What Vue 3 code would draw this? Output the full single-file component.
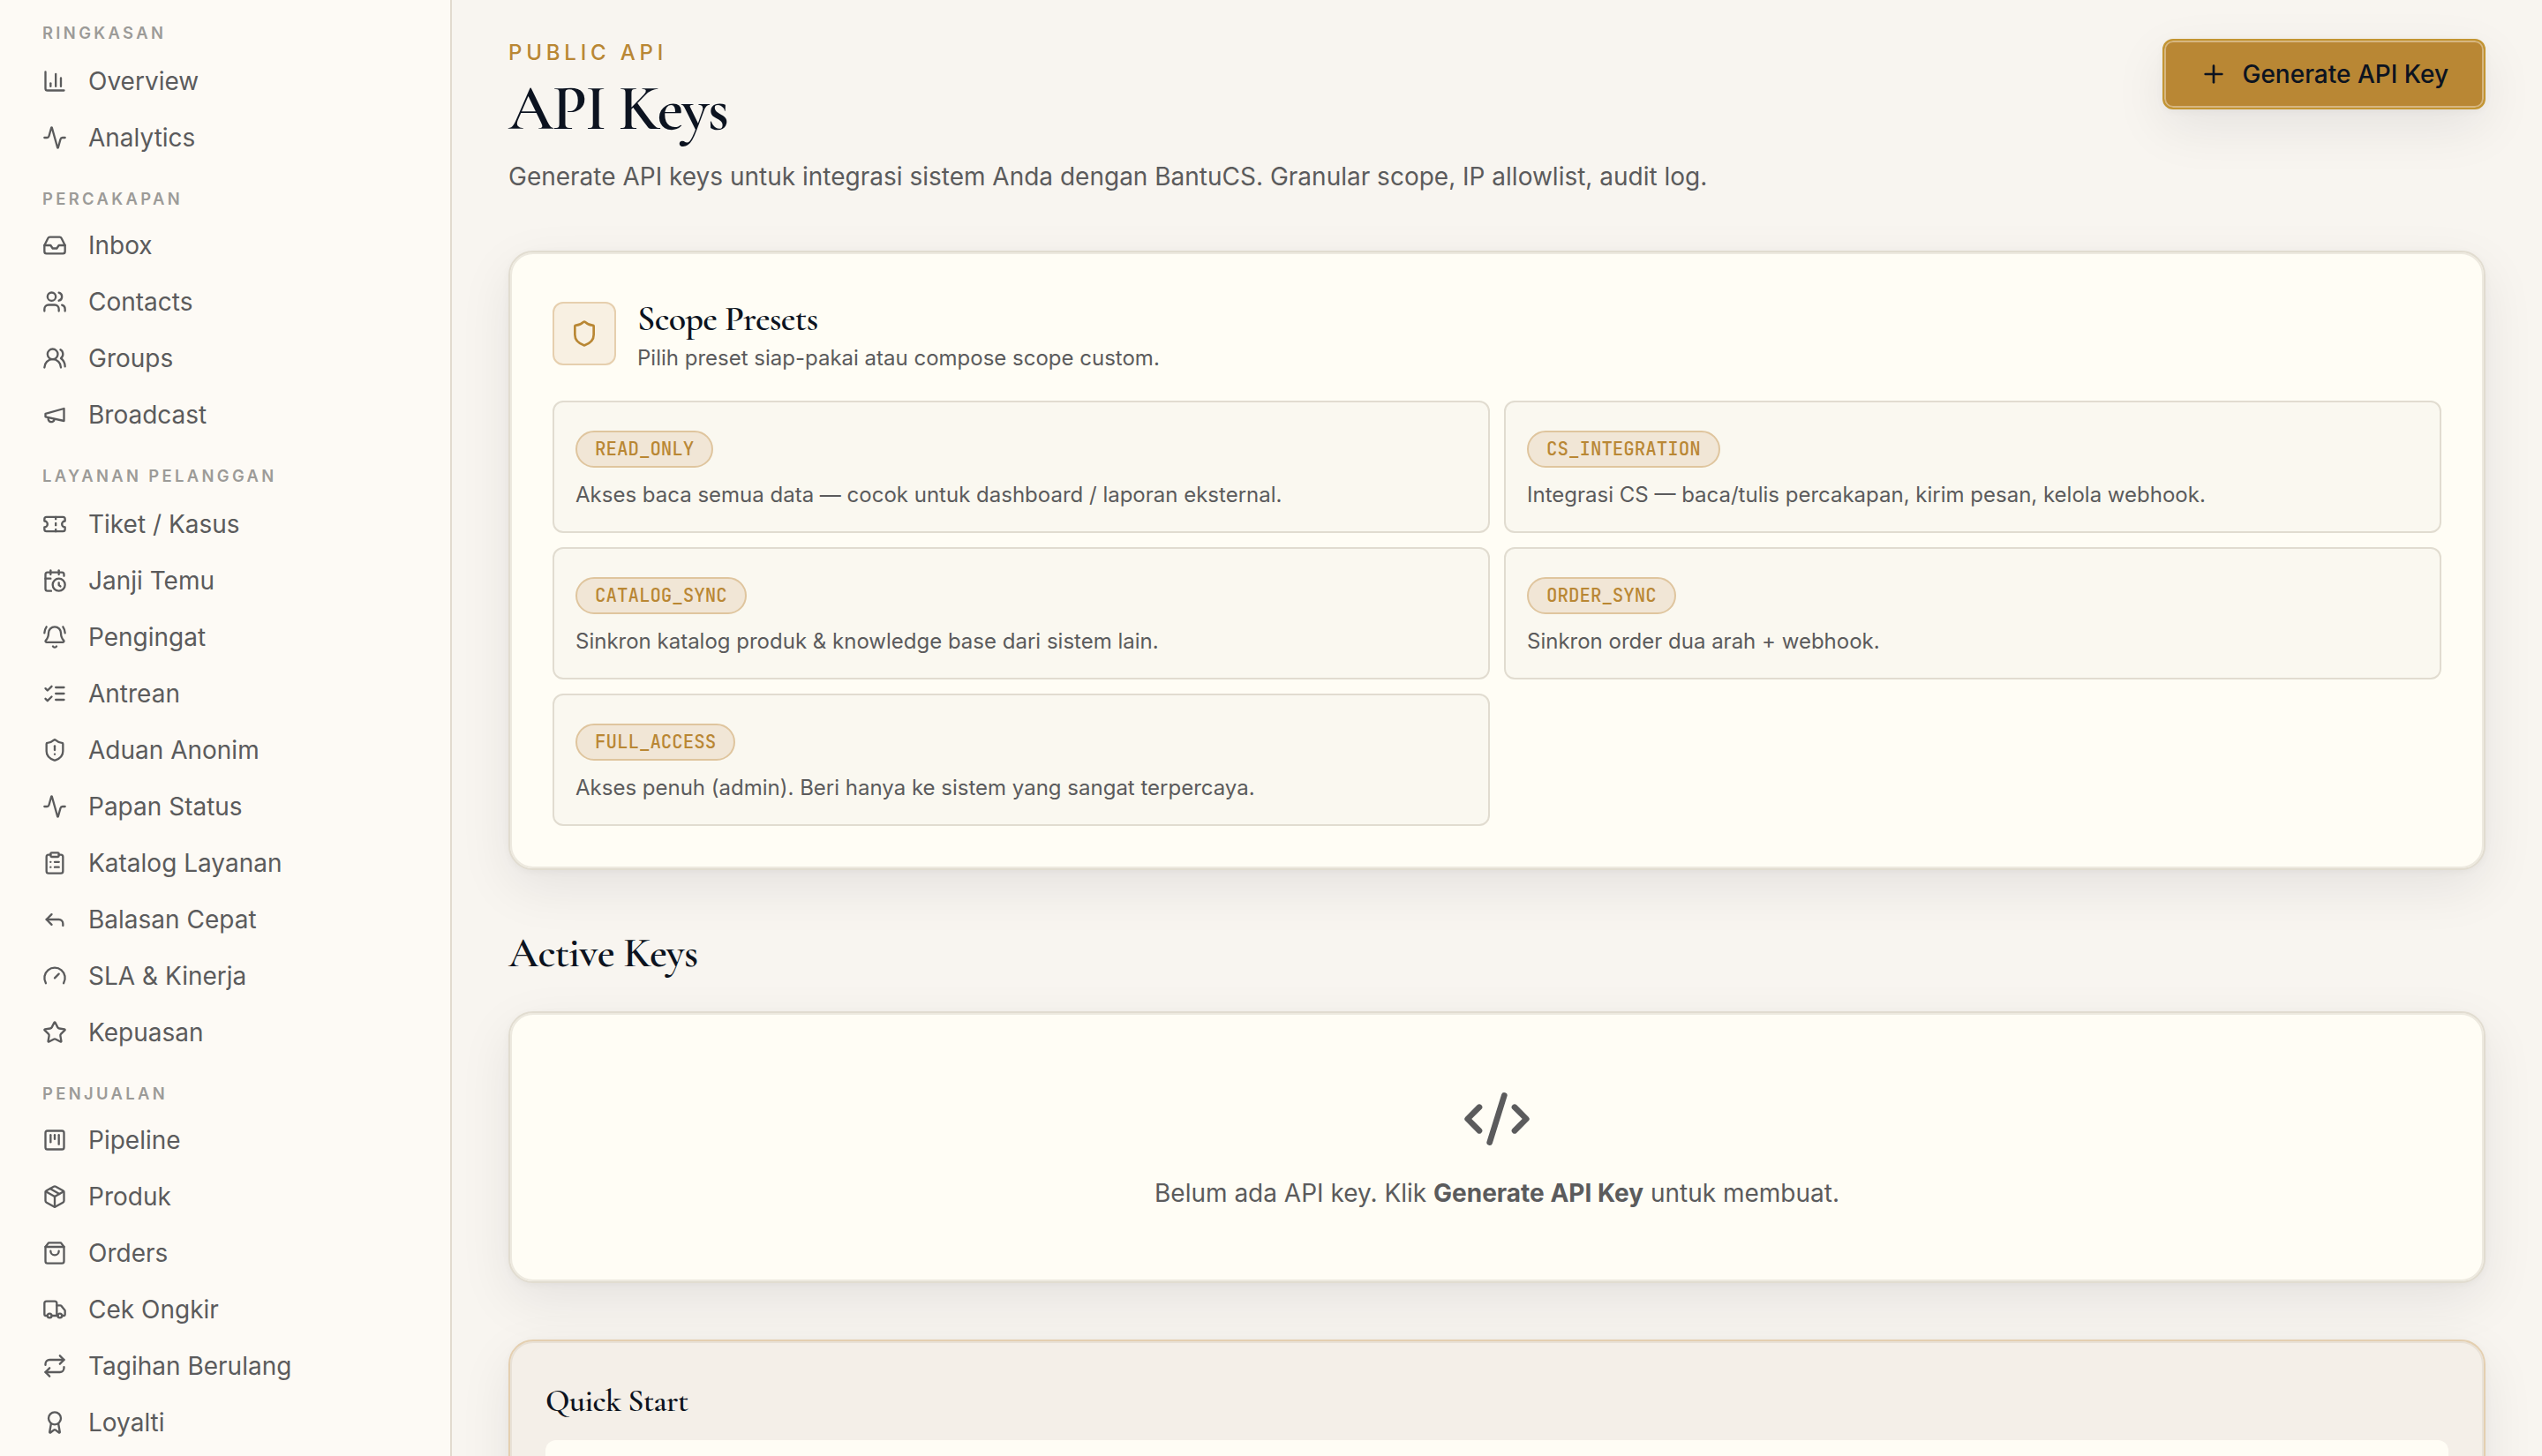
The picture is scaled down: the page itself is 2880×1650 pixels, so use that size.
<script setup>
const activity = '<path d="M22 12h-2.48a2 2 0 0 0-1.93 1.46l-2.35 8.36a.25.25 0 0 1-.48 0L9.24 2.18a.25.25 0 0 0-.48 0l-2.35 8.36A2 2 0 0 1 4.49 12H2"/>'
const shieldPath = 'M20 13c0 5-3.5 7.5-7.66 8.95a1 1 0 0 1-.67-.01C7.5 20.5 4 18 4 13V6a1 1 0 0 1 1-1c2 0 4.5-1.2 6.24-2.72a1.17 1.17 0 0 1 1.52 0C14.51 3.81 17 5 19 5a1 1 0 0 1 1 1z'

const groups = [
  {
    label: 'Ringkasan',
    items: [
      { name: 'Overview', icon: '<path d="M3 3v16a2 2 0 0 0 2 2h16"/><path d="M18 17V9"/><path d="M13 17V5"/><path d="M8 17v-3"/>' },
      { name: 'Analytics', icon: activity },
    ],
  },
  {
    label: 'Percakapan',
    items: [
      { name: 'Inbox', icon: '<path d="M22 12h-6l-2 3h-4l-2-3H2"/><path d="M5.45 5.11 2 12v6a2 2 0 0 0 2 2h16a2 2 0 0 0 2-2v-6l-3.45-6.89A2 2 0 0 0 16.76 4H7.24a2 2 0 0 0-1.79 1.11z"/>' },
      { name: 'Contacts', icon: '<path d="M16 21v-2a4 4 0 0 0-4-4H6a4 4 0 0 0-4 4v2"/><circle cx="9" cy="7" r="4"/><path d="M22 21v-2a4 4 0 0 0-3-3.87"/><path d="M16 3.13a4 4 0 0 1 0 7.75"/>' },
      { name: 'Groups', icon: '<path d="M18 21a8 8 0 0 0-16 0"/><circle cx="10" cy="8" r="5"/><path d="M22 20c0-3.37-2-6.5-4-8a5 5 0 0 0-.45-8.3"/>' },
      { name: 'Broadcast', icon: '<path d="m3 11 18-5v12L3 14v-3z"/><path d="M11.6 16.8a3 3 0 1 1-5.8-1.6"/>' },
    ],
  },
  {
    label: 'Layanan Pelanggan',
    items: [
      { name: 'Tiket / Kasus', icon: '<path d="M2 9a3 3 0 0 1 0 6v2a2 2 0 0 0 2 2h16a2 2 0 0 0 2-2v-2a3 3 0 0 1 0-6V7a2 2 0 0 0-2-2H4a2 2 0 0 0-2 2Z"/><path d="M13 5v2"/><path d="M13 17v2"/><path d="M13 11v2"/>' },
      { name: 'Janji Temu', icon: '<path d="M21 7.5V6a2 2 0 0 0-2-2H5a2 2 0 0 0-2 2v14a2 2 0 0 0 2 2h3.5"/><path d="M16 2v4"/><path d="M8 2v4"/><path d="M3 10h5"/><path d="M17.5 17.5 16 16.3V14"/><circle cx="16" cy="16" r="6"/>' },
      { name: 'Pengingat', icon: '<path d="M10.268 21a2 2 0 0 0 3.464 0"/><path d="M22 8c0-2.3-.8-4.3-2-6"/><path d="M3.262 15.326A1 1 0 0 0 4 17h16a1 1 0 0 0 .74-1.673C19.41 13.956 18 12.499 18 8A6 6 0 0 0 6 8c0 4.499-1.411 5.956-2.738 7.326"/><path d="M4 2C2.8 3.7 2 5.7 2 8"/>' },
      { name: 'Antrean', icon: '<path d="m3 17 2 2 4-4"/><path d="m3 7 2 2 4-4"/><path d="M13 6h8"/><path d="M13 12h8"/><path d="M13 18h8"/>' },
      { name: 'Aduan Anonim', icon: `<path d="${shieldPath}"/><path d="M12 8v4"/><path d="M12 16h.01"/>` },
      { name: 'Papan Status', icon: activity },
      { name: 'Katalog Layanan', icon: '<rect width="8" height="4" x="8" y="2" rx="1"/><path d="M16 4h2a2 2 0 0 1 2 2v14a2 2 0 0 1-2 2H6a2 2 0 0 1-2-2V6a2 2 0 0 1 2-2h2"/><path d="M12 11h4"/><path d="M12 16h4"/><path d="M8 11h.01"/><path d="M8 16h.01"/>' },
      { name: 'Balasan Cepat', icon: '<path d="M20 18v-2a4 4 0 0 0-4-4H4"/><path d="m9 17-5-5 5-5"/>' },
      { name: 'SLA & Kinerja', icon: '<path d="m12 14 4-4"/><path d="M3.34 19a10 10 0 1 1 17.32 0"/>' },
      { name: 'Kepuasan', icon: '<path d="M11.525 2.295a.53.53 0 0 1 .95 0l2.31 4.679a2.123 2.123 0 0 0 1.595 1.16l5.166.756a.53.53 0 0 1 .294.904l-3.736 3.638a2.123 2.123 0 0 0-.611 1.878l.882 5.14a.53.53 0 0 1-.771.56l-4.618-2.428a2.122 2.122 0 0 0-1.973 0L6.396 21.01a.53.53 0 0 1-.77-.56l.881-5.139a2.122 2.122 0 0 0-.611-1.879L2.16 9.795a.53.53 0 0 1 .294-.906l5.165-.755a2.122 2.122 0 0 0 1.597-1.16z"/>' },
    ],
  },
  {
    label: 'Penjualan',
    items: [
      { name: 'Pipeline', icon: '<rect width="18" height="18" x="3" y="3" rx="2"/><path d="M8 7v7"/><path d="M12 7v4"/><path d="M16 7v9"/>' },
      { name: 'Produk', icon: '<path d="M21 8a2 2 0 0 0-1-1.73l-7-4a2 2 0 0 0-2 0l-7 4A2 2 0 0 0 3 8v8a2 2 0 0 0 1 1.73l7 4a2 2 0 0 0 2 0l7-4A2 2 0 0 0 21 16Z"/><path d="m3.3 7 8.7 5 8.7-5"/><path d="M12 22V12"/><path d="m7.5 4.27 9 5.15"/>' },
      { name: 'Orders', icon: '<path d="M6 2 3 6v14a2 2 0 0 0 2 2h14a2 2 0 0 0 2-2V6l-3-4Z"/><path d="M3 6h18"/><path d="M16 10a4 4 0 0 1-8 0"/>' },
      { name: 'Cek Ongkir', icon: '<path d="M14 18V6a2 2 0 0 0-2-2H4a2 2 0 0 0-2 2v11a1 1 0 0 0 1 1h2"/><path d="M15 18H9"/><path d="M19 18h2a1 1 0 0 0 1-1v-3.65a1 1 0 0 0-.22-.624l-3.48-4.35A1 1 0 0 0 17.52 8H14"/><circle cx="17" cy="18" r="2"/><circle cx="7" cy="18" r="2"/>' },
      { name: 'Tagihan Berulang', icon: '<path d="m17 2 4 4-4 4"/><path d="M3 11v-1a4 4 0 0 1 4-4h14"/><path d="m7 22-4-4 4-4"/><path d="M21 13v1a4 4 0 0 1-4 4H3"/>' },
      { name: 'Loyalti', icon: '<path d="m15.477 12.89 1.515 8.526a.5.5 0 0 1-.81.47l-3.58-2.687a1 1 0 0 0-1.197 0l-3.586 2.686a.5.5 0 0 1-.81-.469l1.514-8.526"/><circle cx="12" cy="8" r="6"/>' },
    ],
  },
]

const presets = [
  { key: 'READ_ONLY', text: 'Akses baca semua data — cocok untuk dashboard / laporan eksternal.' },
  { key: 'CS_INTEGRATION', text: 'Integrasi CS — baca/tulis percakapan, kirim pesan, kelola webhook.' },
  { key: 'CATALOG_SYNC', text: 'Sinkron katalog produk & knowledge base dari sistem lain.' },
  { key: 'ORDER_SYNC', text: 'Sinkron order dua arah + webhook.' },
  { key: 'FULL_ACCESS', text: 'Akses penuh (admin). Beri hanya ke sistem yang sangat terpercaya.' },
]
</script>

<template>
  <div class="app">
    <aside class="sidebar">
      <section v-for="g in groups" :key="g.label" class="group">
        <div class="group-label">{{ g.label }}</div>
        <a v-for="item in g.items" :key="item.name" class="nav-item">
          <svg class="icon nav-icon" viewBox="0 0 24 24" v-html="item.icon"></svg>
          <span>{{ item.name }}</span>
        </a>
      </section>
    </aside>

    <main class="main">
      <header class="page-head">
        <div>
          <div class="kicker">PUBLIC API</div>
          <h1>API Keys</h1>
          <p class="lead">Generate API keys untuk integrasi sistem Anda dengan BantuCS. Granular scope, IP allowlist, audit log.</p>
        </div>
        <button class="generate" type="button">
          <svg class="icon" viewBox="0 0 24 24"><path d="M5 12h14" /><path d="M12 5v14" /></svg>
          <span>Generate API Key</span>
        </button>
      </header>

      <section class="card presets">
        <div class="presets-head">
          <div class="badge">
            <svg class="icon" viewBox="0 0 24 24"><path :d="shieldPath" /></svg>
          </div>
          <div>
            <h3>Scope Presets</h3>
            <p>Pilih preset siap-pakai atau compose scope custom.</p>
          </div>
        </div>
        <div class="grid">
          <div v-for="p in presets" :key="p.key" class="preset">
            <span class="pill">{{ p.key }}</span>
            <p>{{ p.text }}</p>
          </div>
        </div>
      </section>

      <h2>Active Keys</h2>

      <section class="card empty">
        <svg class="icon code-icon" viewBox="0 0 24 24"><path d="m18 16 4-4-4-4" /><path d="m6 8-4 4 4 4" /><path d="m14.5 4-5 16" /></svg>
        <p>Belum ada API key. Klik <strong>Generate API Key</strong> untuk membuat.</p>
      </section>

      <section class="card quick">
        <h3>Quick Start</h3>
        <div class="code"></div>
      </section>
    </main>
  </div>
</template>

<style>
html,
body {
  background: #f8f5f0;
  overflow: hidden;
}
</style>

<style scoped>
.app {
  --shadow: 0 2px 8px rgba(12, 19, 32, 0.04), 0 20px 60px rgba(12, 19, 32, 0.08);
  display: flex;
  width: 2880px;
  height: 1650px;
  overflow: hidden;
  background: #f8f5f0;
  color: #5b5b5c;
  font-family: Inter, "Liberation Sans", sans-serif;
  font-size: 28px;
}
h1,
h2,
h3,
p {
  margin: 0;
}
h1,
h2,
h3 {
  font-family: "Cormorant Garamond", "EB Garamond", "Liberation Serif", serif;
  font-weight: 600;
  color: #0c1320;
}
.icon {
  flex: none;
  width: 32px;
  height: 32px;
  fill: none;
  stroke: currentColor;
  stroke-width: 2;
  stroke-linecap: round;
  stroke-linejoin: round;
}

.sidebar {
  box-sizing: border-box;
  flex: none;
  width: 512px;
  padding: 0 48px;
  background: #fdfaf5;
  border-right: 2px solid #e2dbcf;
}
.group-label {
  padding: 23px 0 7px;
  font-size: 18.4px;
  line-height: 28px;
  font-weight: 600;
  letter-spacing: 3.36px;
  text-transform: uppercase;
  color: #9c9b98;
}
.group:nth-child(odd) .group-label {
  padding-bottom: 9px;
}
.nav-item {
  display: flex;
  align-items: center;
  gap: 24px;
  height: 64px;
}
.nav-icon {
  width: 28px;
  height: 28px;
}

.main {
  flex: 1;
  padding: 44px 64px 0;
}
.page-head {
  display: flex;
  justify-content: space-between;
  align-items: flex-start;
  height: 240px;
}
.kicker {
  font-size: 24px;
  line-height: 32px;
  font-weight: 500;
  letter-spacing: 0.2em;
  color: #b98734;
}
h1 {
  margin-top: 7px;
  font-size: 72px;
  line-height: 80px;
  letter-spacing: -0.025em;
}
.lead {
  margin-top: 16px;
  line-height: 42px;
}
.generate {
  display: flex;
  align-items: center;
  gap: 16px;
  box-sizing: border-box;
  height: 80px;
  padding: 0 40px;
  border: 2px solid #c39532;
  border-radius: 12px;
  background: #b98734;
  color: #0c1320;
  font: 500 28px Inter, "Liberation Sans", sans-serif;
  box-shadow: inset 0 0 0 2px #d6b680, var(--shadow);
}

.card {
  box-sizing: border-box;
  border: 2px solid #e1dcd0;
  border-radius: 28px;
  background: #fffdf5;
  box-shadow: inset 0 0 0 2px #ede9df, var(--shadow);
}
.presets {
  padding: 48px;
}
.presets-head {
  display: flex;
  align-items: center;
  gap: 24px;
  height: 88px;
  margin-bottom: 32px;
}
.badge {
  display: flex;
  align-items: center;
  justify-content: center;
  box-sizing: border-box;
  width: 72px;
  height: 72px;
  border: 2px solid #e6cfae;
  border-radius: 12px;
  background: #f8f0e2;
  color: #b98734;
}
.presets-head h3 {
  font-size: 40px;
  line-height: 54px;
  letter-spacing: -0.015em;
}
.presets-head p {
  padding-top: 1px;
  font-size: 24px;
  line-height: 33px;
}
.grid {
  display: grid;
  grid-template-columns: 1fr 1fr;
  gap: 16px;
}
.preset {
  display: flex;
  flex-direction: column;
  align-items: flex-start;
  box-sizing: border-box;
  height: 150px;
  padding: 32px 24px 22px;
  border: 2px solid #e1dcd0;
  border-radius: 12px;
  background: #faf8f0;
}
.pill {
  box-sizing: border-box;
  height: 42px;
  padding: 0 20px;
  border: 2px solid #dfc59e;
  border-radius: 21px;
  background: #f1e6d6;
  color: #b98734;
  font: 500 20.8px/38px "JetBrains Mono", "DejaVu Sans Mono", monospace;
}
.preset p {
  margin-top: 13px;
  font-size: 24px;
  line-height: 36px;
}
h2 {
  margin: 65px 0 37px;
  font-size: 48px;
  line-height: 58px;
  letter-spacing: -0.015em;
}
.empty {
  display: flex;
  flex-direction: column;
  align-items: center;
  padding: 80px;
}
.code-icon {
  width: 80px;
  height: 80px;
}
.empty p {
  margin-top: 24px;
  line-height: 40px;
}
.empty strong {
  font-weight: 700;
}
.quick {
  height: 300px;
  margin-top: 64px;
  padding: 40px;
  border-color: #e4cfb0;
  background: #f4efe8;
  box-shadow: inset 0 0 0 2px #e8e1d7, var(--shadow);
}
.quick h3 {
  font-size: 36px;
  line-height: 56px;
  letter-spacing: -0.015em;
}
.code {
  height: 200px;
  margin-top: 16px;
  border-radius: 12px;
  background: #fffdf5;
}
</style>
